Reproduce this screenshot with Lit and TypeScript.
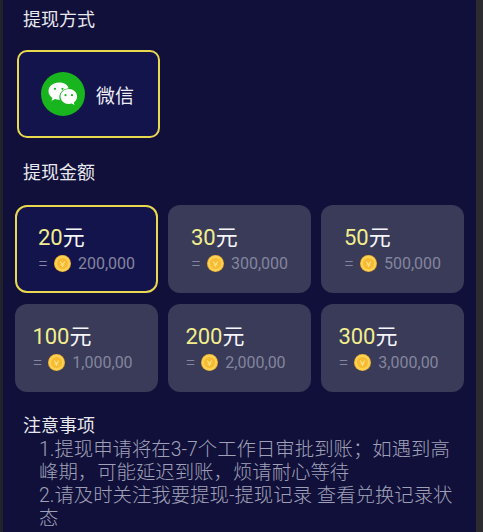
import { LitElement, html, css, svg } from "lit";
import { customElement } from "lit/decorators.js";

const amounts = [
  { n: "20", v: "200,000", on: true },
  { n: "30", v: "300,000" },
  { n: "50", v: "500,000" },
  { n: "100", v: "1,000,00" },
  { n: "200", v: "2,000,00" },
  { n: "300", v: "3,000,00" },
];

@customElement("app-root")
export class AppRoot extends LitElement {
  static styles = css`
    :host { display: flex; width: 483px; height: 532px; overflow: hidden;
      font-family: "Roboto", "Noto Sans CJK SC", sans-serif; }
    .edge { height: 532px; flex: none; }
    .edge.l { width: 3px; background: #22222a; }
    .edge.r { width: 7px; background: #2b2b30; }
    .panel { box-sizing: border-box; width: 473px; flex: none; height: 532px; background: #10103a;
      padding: 0 12px; overflow: hidden; }
    .title { color: #e8e8ee; font-size: 18px; font-weight: 400; line-height: 24px; padding-left: 8px; }
    .t1 { padding-top: 8px; }
    .way { box-sizing: border-box; margin: 18px 0 0 2px; width: 143px; height: 88px; border: 2px solid #e8d94e;
      border-radius: 10px; background: #14144c; display: flex; align-items: center; padding-left: 22px; gap: 11px;
      color: #eeeef4; font-size: 19px; font-weight: 400; }
    .way svg { width: 44px; height: 44px; display: block; }
    .t2 { margin-top: 23px; }
    .grid { display: grid; grid-template-columns: repeat(3, 143px); gap: 11px 10px; margin-top: 20px; }
    .card { box-sizing: border-box; height: 88px; border-radius: 12px; background: #393b58;
      display: flex; flex-direction: column; align-items: center; justify-content: center; }
    .card.on { background: #14144c; border: 2px solid #e8d94e; }
    .inner { display: flex; flex-direction: column; gap: 3px; }
    .inner.wide { transform: translateX(-4px); }
    .price { color: #f6f6fa; font-size: 22px; font-weight: 400; line-height: 26px; height: 26px; }
    .price b { font-weight: 400; color: #f2ee8e; }
    .row { display: flex; align-items: center; color: #84859e; font-size: 16px; font-weight: 400; line-height: 20px; height: 20px; white-space: nowrap; }
    .row svg { width: 17px; height: 17px; margin: 0 7px 0 6px; flex: none; }
    .row .eq { font-size: 18px; font-weight: 300; }
    .t3 { margin-top: 22px; }
    .notes { margin: 0; padding: 0 8px 0 24px; color: #a0a1b8; font-size: 19.400px; font-weight: 300; line-height: 23px; }
  `;

  coin() {
    return html`<svg viewBox="0 0 16 16" aria-hidden="true">
      <circle cx="8" cy="8" r="8" fill="#f3b233"/>
      <circle cx="8" cy="8" r="7.200" fill="#fcd253"/>
      <circle cx="8" cy="8" r="5.200" fill="#f6bb33"/>
      ${svg`<path d="M5.800 6.200 L8 9 L10.200 6.200 M8 9 V11.200 M6.200 9.400 H9.800" fill="none" stroke="#fcdf80" stroke-width="1"/>`}
    </svg>`;
  }

  wechat() {
    return svg`<svg viewBox="0 0 44 44" aria-hidden="true">
      <circle cx="22" cy="22" r="22" fill="#18b51e"/>
      <path d="M18 10.500c-5.800 0-10.500 3.900-10.500 8.800 0 2.800 1.500 5.100 3.900 6.700l-1 3 3.600-1.900c1.200.4 2.500.6 4 .6h1c-.3-.8-.4-1.600-.4-2.400 0-4.600 4-8.100 9-8.200C27.600 13.200 23.300 10.500 18 10.500z" fill="#fff"/>
      <circle cx="14" cy="16.800" r="1.100" fill="#18b51e"/>
      <circle cx="21.500" cy="16.800" r="1.100" fill="#18b51e"/>
      <ellipse cx="27.800" cy="25" rx="9.300" ry="8.800" fill="#18b51e"/>
      <path d="M27.800 17c-4.600 0-8.300 3.300-8.300 7.500s3.700 7.500 8.300 7.500c1 0 2-.2 2.900-.5l2.800 1.600-.7-2.600c2.200-1.400 3.300-3.600 3.300-6 0-4.200-3.700-7.500-8.300-7.500z" fill="#fff"/>
      <circle cx="24.500" cy="23.200" r="1.100" fill="#18b51e"/>
      <circle cx="31" cy="23.200" r="1.100" fill="#18b51e"/>
    </svg>`;
  }

  render() {
    return html`<div class="edge l"></div><div class="panel">
      <div class="title t1">提现方式</div>
      <div class="way">${this.wechat()}<span>微信</span></div>
      <div class="title t2">提现金额</div>
      <div class="grid">
        ${amounts.map((a, i) => html`<div class="card ${a.on ? "on" : ""}">
          <div class="inner ${i > 2 ? "wide" : ""}">
            <div class="price"><b>${a.n}</b>元</div>
            <div class="row"><span class="eq">=</span>${this.coin()}<span class="val">${a.v}</span></div>
          </div>
        </div>`)}
      </div>
      <div class="title t3">注意事项</div>
      <div class="notes">
        <div>1.提现申请将在3-7个工作日审批到账；如遇到高峰期，可能延迟到账，烦请耐心等待</div>
        <div>2.请及时关注我要提现-提现记录 查看兑换记录状态</div>
      </div>
    </div><div class="edge r"></div>`;
  }
}
